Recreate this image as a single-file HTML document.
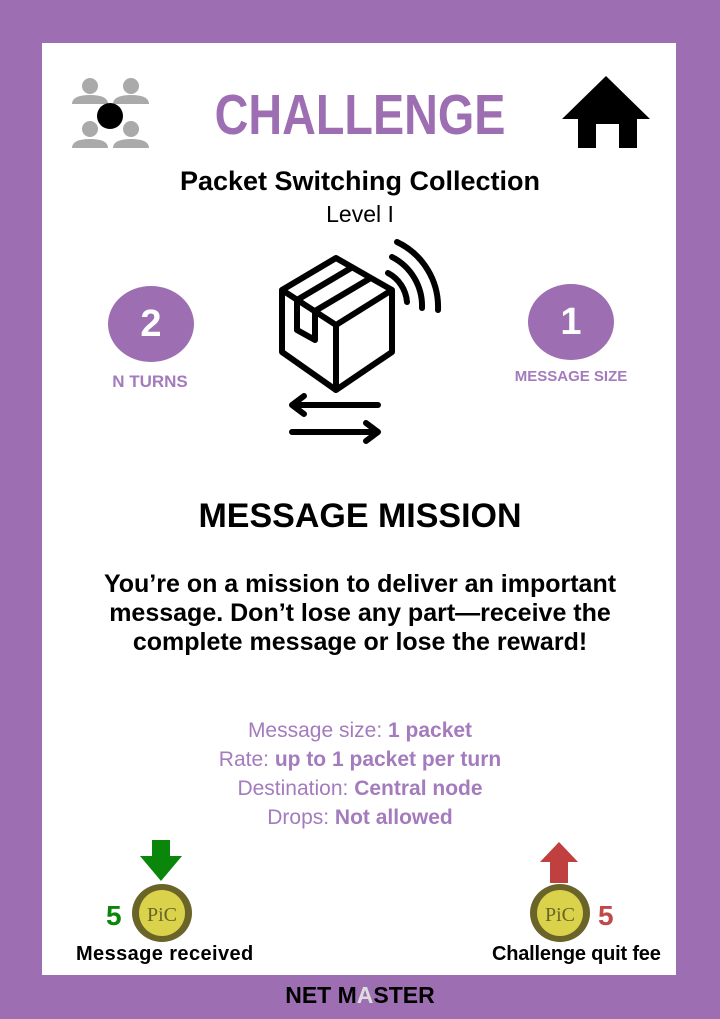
<!DOCTYPE html>
<html><head><meta charset="utf-8"><style>
body{margin:0;width:720px;height:1019px;background:#9d6fb2;position:relative;overflow:hidden;font-family:"Liberation Sans",sans-serif}
.card{position:absolute;left:42px;top:43px;width:634px;height:932px;background:#fff}
.a{position:absolute;white-space:nowrap}
.c{left:0;width:720px;text-align:center}
.circ{position:absolute;width:86px;height:76px;border-radius:50%;background:#9d6fb2;color:#fff;font-weight:bold;font-size:38px;text-align:center;line-height:76px}
.p{color:#a47bbd}
</style></head><body>
<div class="card"></div>
<svg class="a" style="left:70px;top:76px" width="82" height="80">
<g fill="#aaa"><circle cx="20" cy="10" r="8"/><path d="M2 28 Q2 19 20 19 Q38 19 38 28Z"/><circle cx="61" cy="10" r="8"/><path d="M43 28 Q43 19 61 19 Q79 19 79 28Z"/>
<circle cx="20" cy="53" r="8"/><path d="M2 72 Q2 63 20 63 Q38 63 38 72Z"/><circle cx="61" cy="53" r="8"/><path d="M43 72 Q43 63 61 63 Q79 63 79 72Z"/></g>
<circle cx="40" cy="40" r="13" fill="#000"/></svg>
<div class="a c" style="top:82px;font-size:57px;font-weight:bold;color:#9d6fb2;transform:scaleX(0.82)">CHALLENGE</div>
<svg class="a" style="left:560px;top:74px" width="92" height="76"><path d="M46 2 L90 45 L77 45 L77 74 L59 74 L59 50 L36 50 L36 74 L18 74 L18 45 L2 45Z" fill="#000"/></svg>
<div class="a c" style="top:166px;font-size:27px;font-weight:bold">Packet Switching Collection</div>
<div class="a c" style="top:201px;font-size:23px">Level I</div>
<div class="circ" style="left:108px;top:286px">2</div>
<div class="a p" style="left:100px;top:372px;font-size:17px;font-weight:bold;width:100px;text-align:center">N TURNS</div>
<div class="circ" style="left:528px;top:284px">1</div>
<div class="a p" style="left:505px;top:368px;font-size:15px;font-weight:bold;width:132px;text-align:center">MESSAGE SIZE</div>
<svg class="a" style="left:0;top:0" width="720" height="450" fill="none" stroke="#000" stroke-width="6" stroke-linejoin="round" stroke-linecap="round">
<path d="M336 258 L282 290 L282 352 L336 390 L392 352 L392 290 Z M282 290 L336 325 L392 290 M336 325 L336 390"/>
<path d="M297 300 L351 268 M315 311 L369 279 M297 300 L297 330 L315 340 L315 311"/>
<path d="M388 273 A36 36 0 0 1 407 302 M392 257 A55 55 0 0 1 422 308 M397 242 A72 72 0 0 1 438 310"/>
<path d="M292 405 L378 405 M292 405 L304 396 M292 405 L304 414 M292 432 L378 432 M378 432 L366 423 M378 432 L366 441"/>
</svg>
<div class="a c" style="top:497px;font-size:34px;font-weight:bold">MESSAGE MISSION</div>
<div class="a c" style="top:570px;font-size:25px;font-weight:bold;line-height:29px">You’re on a mission to deliver an important<br>message. Don’t lose any part—receive the<br>complete message or lose the reward!</div>
<div class="a c p" style="top:716px;font-size:21px;line-height:29px">Message size: <b>1 packet</b><br>Rate: <b>up to 1 packet per turn</b><br>Destination: <b>Central node</b><br>Drops: <b>Not allowed</b></div>
<svg class="a" style="left:138px;top:840px" width="46" height="44"><path d="M14 0 H32 V16 H44 L23 41 L2 16 H14Z" fill="#0a860a"/></svg>
<svg class="a" style="left:536px;top:842px" width="46" height="42"><path d="M14 41 H32 V20 H42 L23 0 L4 20 H14Z" fill="#c04040"/></svg>
<svg class="a" style="left:131px;top:883px" width="62" height="60"><ellipse cx="31" cy="30" rx="30" ry="29" fill="#6b6429"/><ellipse cx="31" cy="30" rx="23" ry="23" fill="#d9d24a"/><text x="31" y="38" text-anchor="middle" font-size="20" fill="#6b6429" font-family="Liberation Serif">PiC</text></svg>
<svg class="a" style="left:529px;top:883px" width="62" height="60"><ellipse cx="31" cy="30" rx="30" ry="29" fill="#6b6429"/><ellipse cx="31" cy="30" rx="23" ry="23" fill="#d9d24a"/><text x="31" y="38" text-anchor="middle" font-size="20" fill="#6b6429" font-family="Liberation Serif">PiC</text></svg>
<div class="a" style="left:106px;top:900px;font-size:28px;font-weight:bold;color:#0a860a">5</div>
<div class="a" style="left:598px;top:900px;font-size:28px;font-weight:bold;color:#c04848">5</div>
<div class="a" style="left:76px;top:943px;font-size:20px;font-weight:bold;letter-spacing:0.4px">Message received</div>
<div class="a" style="left:492px;top:943px;font-size:20px;font-weight:bold;letter-spacing:-0.2px">Challenge quit fee</div>
<div class="a c" style="top:982px;font-size:23px;font-weight:bold">NET M<span style="color:#ddd">A</span>STER</div>
</body></html>
